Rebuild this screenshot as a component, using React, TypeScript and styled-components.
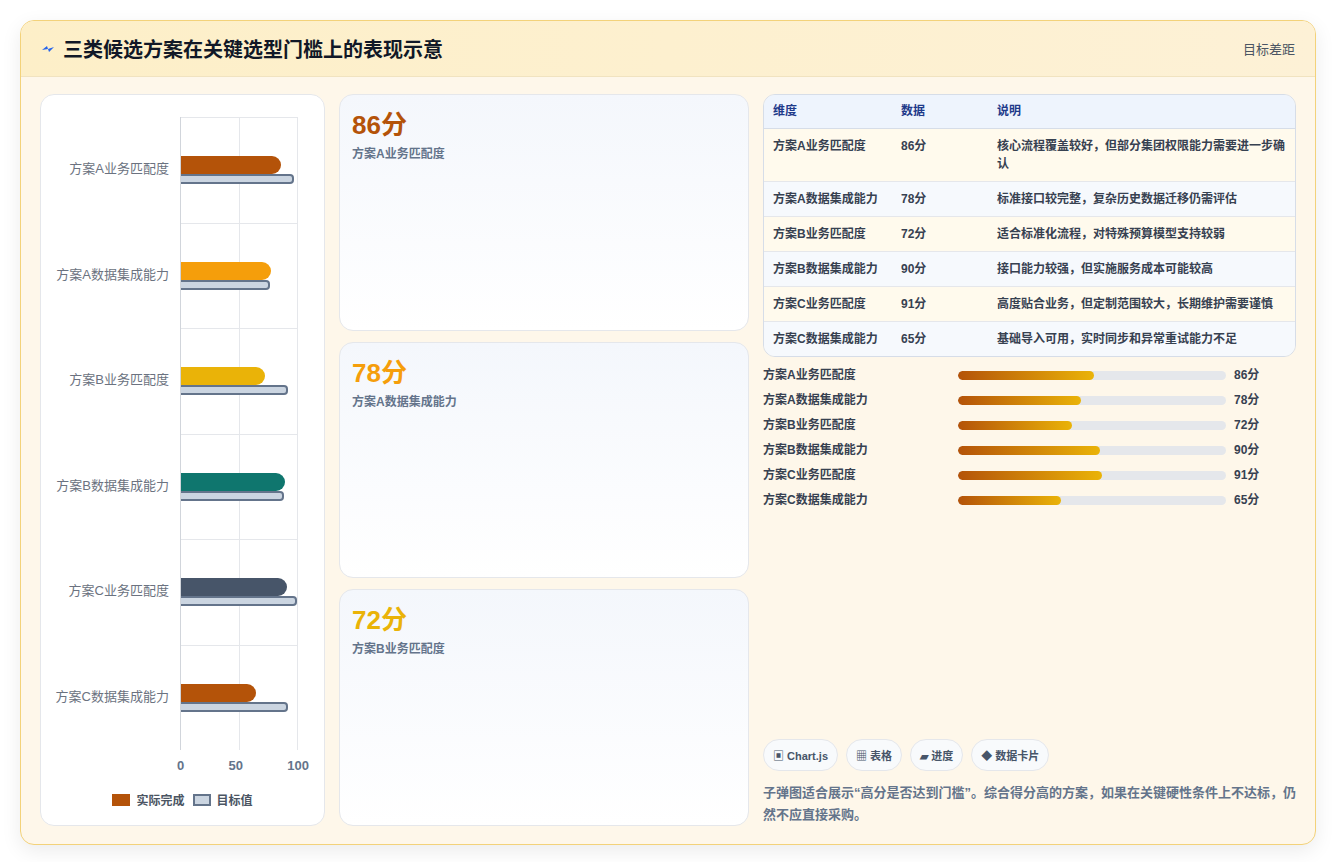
import React from "react";
import styled, { createGlobalStyle } from "styled-components";

const GlobalStyle = createGlobalStyle`
  body { margin: 0; background: #fff; font-family: "Liberation Sans", "Noto Sans CJK SC", sans-serif; }
`;

const Page = styled.div`
  padding: 20px 20px 19px 20px;
  width: 1336px;
  box-sizing: border-box;
`;

const Card = styled.div`
  border: 1px solid #f3d27a;
  border-radius: 14px;
  background: #fef7ea;
  box-shadow: 0 6px 20px rgba(0, 0, 0, 0.08);
  overflow: hidden;
`;

const Header = styled.div`
  height: 55px;
  display: flex;
  align-items: center;
  justify-content: space-between;
  padding: 0 20px;
  background: linear-gradient(90deg, #fdefc8, #fdf1d6);
  border-bottom: 1px solid #f1e3c0;
`;

const Title = styled.h1`
  margin: 0;
  font-size: 20px;
  font-weight: 700;
  color: #111827;
  display: flex;
  align-items: center;
  gap: 8px;
`;

const Tag = styled.span`
  font-size: 13px;
  color: #4b5563;
`;

const Body = styled.div`
  display: grid;
  grid-template-columns: 285px 410px 1fr;
  gap: 14px;
  padding: 17px 19px 18px 19px;
  height: 767px;
  box-sizing: border-box;
`;

const Panel = styled.div`
  background: #fff;
  border: 1px solid #e5e7eb;
  border-radius: 14px;
  position: relative;
`;

const Chart = styled.div`
  display: grid;
  grid-template-columns: 139px 118px;
  padding: 22px 0 0 0;
`;

const Labels = styled.div`
  display: grid;
  grid-template-rows: repeat(6, 105.5px);
`;

const Label = styled.div`
  display: flex;
  align-items: center;
  justify-content: flex-end;
  padding-right: 11px;
  font-size: 13px;
  color: #6b7280;
  white-space: nowrap;
  margin-top: -4px;
`;

const Plot = styled.div`
  border-left: 1px solid #d1d5db;
  border-right: 1px solid #e5e7eb;
  background-image: linear-gradient(90deg, transparent 58px, #e5e7eb 58px, #e5e7eb 59px, transparent 59px);
  display: grid;
  grid-template-rows: repeat(6, 105.5px);
`;

const Band = styled.div`
  border-top: 1px solid #e5e7eb;
  display: flex;
  flex-direction: column;
  justify-content: center;
`;

const Bar = styled.div<{ $c: string }>`
  height: 18px;
  background: ${(p) => p.$c};
  border-radius: 0 9px 9px 0;
`;

const Target = styled.div`
  height: 6px;
  background: #cbd5e1;
  border: 2px solid #64748b;
  border-left: none;
  border-radius: 0 4px 4px 0;
  box-sizing: content-box;
`;

const Axis = styled.div`
  display: flex;
  justify-content: space-between;
  margin: 8px 0 0 136px;
  width: 132px;
  font-size: 13px;
  font-weight: 700;
  color: #64748b;
`;

const Legend = styled.div`
  display: flex;
  justify-content: center;
  gap: 8px;
  margin-top: 18px;
  font-size: 12px;
  font-weight: 700;
  color: #4b5563;
`;

const LegendItem = styled.span`
  display: flex;
  align-items: center;
  gap: 6px;
`;

const Swatch = styled.span<{ $outline?: boolean }>`
  width: 18px;
  height: 12px;
  box-sizing: border-box;
  background: ${(p) => (p.$outline ? "#cbd5e1" : "#b45309")};
  border: ${(p) => (p.$outline ? "2px solid #64748b" : "none")};
`;

const Stack = styled.div`
  display: grid;
  grid-template-rows: repeat(3, 1fr);
  gap: 11px;
`;

const StatCard = styled.div`
  border: 1px solid #e5e7eb;
  border-radius: 14px;
  background: linear-gradient(180deg, #f4f7fc, #fff);
  padding: 9px 12px;
`;

const Big = styled.div<{ $c: string }>`
  font-size: 26px;
  font-weight: 700;
  color: ${(p) => p.$c};
`;

const Sub = styled.div`
  font-size: 12px;
  font-weight: 700;
  color: #64748b;
  margin-top: 3px;
`;

const Right = styled.div`
  display: flex;
  flex-direction: column;
`;

const TableWrap = styled.div`
  border: 1px solid #d6dde8;
  border-radius: 12px;
  overflow: hidden;
`;

const Table = styled.table`
  width: 100%;
  border-collapse: collapse;
  font-size: 12px;
  font-weight: 700;
  color: #374151;
  th { background: #eef4fd; color: #1e3a8a; text-align: left; padding: 8px 9px; line-height: 17px; border-bottom: 1px solid #d6dde8; }
  td { padding: 8px 9px; border-bottom: 1px solid #e5e7eb; vertical-align: top; line-height: 18px; }
  tr:nth-child(odd) td { background: #fffaed; }
  tr:nth-child(even) td { background: #f6f9fd; }
  tr:last-child td { border-bottom: none; }
`;

const Progress = styled.div`
  display: grid;
  grid-template-columns: 195px 276px 1fr;
  row-gap: 10px;
  margin-top: 11px;
  font-size: 12px;
  font-weight: 700;
  line-height: 15px;
  color: #374151;
  align-items: center;
`;

const Track = styled.div`
  height: 9px;
  background: #e5e7eb;
  border-radius: 5px;
  overflow: hidden;
  margin-right: 8px;
`;

const Fill = styled.div`
  height: 100%;
  background: linear-gradient(90deg, #b45309, #eab308);
  border-radius: 5px;
`;

const Chips = styled.div`
  margin-top: auto;
  display: flex;
  gap: 8px;
`;

const Chip = styled.span`
  border: 1px solid #e5e7eb;
  background: #f8fafc;
  border-radius: 16px;
  padding: 7px 9px;
  font-size: 11px;
  font-weight: 700;
  color: #475569;
`;

const Note = styled.p`
  margin: 11px 0 0;
  font-size: 13px;
  font-weight: 700;
  line-height: 22px;
  color: #64748b;
`;

const rows = [
  { n: "方案A业务匹配度", v: 86, t: 97, c: "#b45309", d: "核心流程覆盖较好，但部分集团权限能力需要进一步确认" },
  { n: "方案A数据集成能力", v: 78, t: 77, c: "#f59e0b", d: "标准接口较完整，复杂历史数据迁移仍需评估" },
  { n: "方案B业务匹配度", v: 72, t: 92, c: "#eab308", d: "适合标准化流程，对特殊预算模型支持较弱" },
  { n: "方案B数据集成能力", v: 90, t: 89, c: "#0f766e", d: "接口能力较强，但实施服务成本可能较高" },
  { n: "方案C业务匹配度", v: 91, t: 100, c: "#475569", d: "高度贴合业务，但定制范围较大，长期维护需要谨慎" },
  { n: "方案C数据集成能力", v: 65, t: 92, c: "#b45309", d: "基础导入可用，实时同步和异常重试能力不足" },
];

export default function App() {
  return (
    <Page>
      <GlobalStyle />
      <Card>
        <Header>
          <Title>
            <svg width="14" height="10" viewBox="0 0 14 10"><path d="M1 6 L6 2 L7 5 L13 3 L8 8 L7 5 Z" fill="#2563eb" /></svg>
            三类候选方案在关键选型门槛上的表现示意
          </Title>
          <Tag>目标差距</Tag>
        </Header>
        <Body>
          <Panel>
            <Chart>
              <Labels>
                {rows.map((r) => <Label key={r.n}>{r.n}</Label>)}
              </Labels>
              <Plot>
                {rows.map((r) => (
                  <Band key={r.n}>
                    <Bar $c={r.c} style={{ width: `${r.v}%` }} />
                    <Target style={{ width: `calc(${r.t}% - 2px)` }} />
                  </Band>
                ))}
              </Plot>
            </Chart>
            <Axis><span>0</span><span>50</span><span>100</span></Axis>
            <Legend>
              <LegendItem><Swatch />实际完成</LegendItem>
              <LegendItem><Swatch $outline />目标值</LegendItem>
            </Legend>
          </Panel>
          <Stack>
            <StatCard><Big $c="#b45309">86分</Big><Sub>方案A业务匹配度</Sub></StatCard>
            <StatCard><Big $c="#f59e0b">78分</Big><Sub>方案A数据集成能力</Sub></StatCard>
            <StatCard><Big $c="#eab308">72分</Big><Sub>方案B业务匹配度</Sub></StatCard>
          </Stack>
          <Right>
            <TableWrap>
              <Table>
                <thead>
                  <tr><th style={{ width: 110 }}>维度</th><th style={{ width: 78 }}>数据</th><th>说明</th></tr>
                </thead>
                <tbody>
                  {rows.map((r) => (
                    <tr key={r.n}><td>{r.n}</td><td>{r.v}分</td><td>{r.d}</td></tr>
                  ))}
                </tbody>
              </Table>
            </TableWrap>
            <Progress>
              {rows.map((r) => (
                <React.Fragment key={r.n}>
                  <span>{r.n}</span>
                  <Track><Fill style={{ width: `${r.v * 0.59}%` }} /></Track>
                  <span>{r.v}分</span>
                </React.Fragment>
              ))}
            </Progress>
            <Chips>
              <Chip>▣ Chart.js</Chip>
              <Chip>▦ 表格</Chip>
              <Chip>▰ 进度</Chip>
              <Chip>◆ 数据卡片</Chip>
            </Chips>
            <Note>子弹图适合展示“高分是否达到门槛”。综合得分高的方案，如果在关键硬性条件上不达标，仍然不应直接采购。</Note>
          </Right>
        </Body>
      </Card>
    </Page>
  );
}
